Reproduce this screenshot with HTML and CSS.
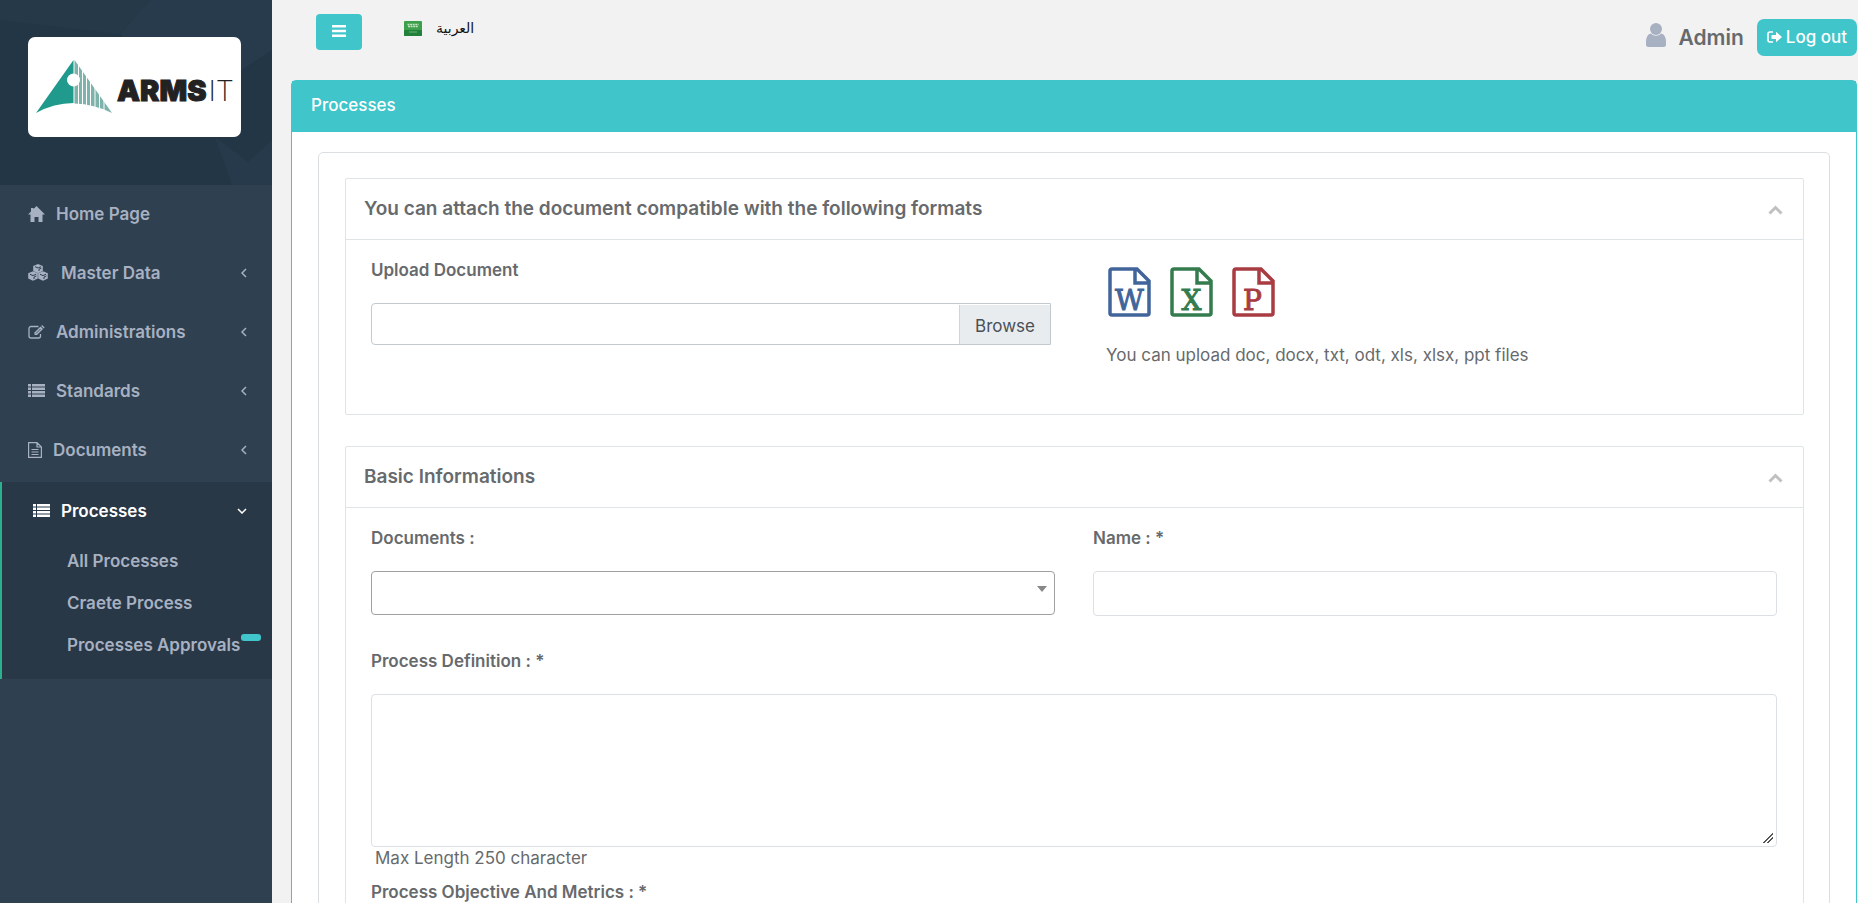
FILE: index.html
```html
<!DOCTYPE html>
<html lang="en">
<head>
    <meta charset="UTF-8">
    <meta name="viewport" content="width=device-width, initial-scale=1.0">
    <title>ARMSIT | Processes</title>
    <link rel="stylesheet" href="styles.css">
</head>
<body>
    <div class="wrapper">
        <nav class="sidebar">
            <div class="sidebar-header">
                <svg class="header-pattern" viewBox="0 0 272 185" preserveAspectRatio="none">
                    <path d="M150 0h122v50L180 110 120 34z" fill="#273b4c"/>
                    <path d="M0 0h150l-30 34L0 20z" fill="#253949"/>
                    <path d="M215 137l33 25 24-22v45h-40z" fill="#263a4b"/>
                </svg>
                <a href="#" class="logo">
                    <svg class="logo-mark" width="76" height="54" viewBox="0 0 76 54">
                        <path d="M37.500 0v43Q18 43 0 53z" fill="#1f9a8c"/>
                        <path d="M38.500 0L76 53Q58 44 38.500 43.500z" fill="#7db3aa"/>
                        <path d="M42.500 0v54M46.500 0v54M50.500 0v54M54.500 0v54M59 0v54M63.500 0v54M68 0v54" stroke="#fff" stroke-width="1"/>
                        <circle cx="37.500" cy="20" r="6.500" fill="#fff"/>
                    </svg>
                    <span class="logo-text"><b>ARMS</b><i>IT</i></span>
                </a>
            </div>

            <ul class="menu">
                <li>
                    <a href="#" class="menu-link">
                        <svg width="17" height="16" viewBox="0 0 17 16" fill="currentColor"><path d="M8.500 0L17 8.500h-2.500V16h-4v-5h-4v5h-4V8.500H0L3 5.500V2h2.500v1z"/></svg>
                        <span>Home Page</span>
                    </a>
                </li>
                <li>
                    <a href="#" class="menu-link">
                        <svg width="20" height="17" viewBox="0 0 20 17">
                            <g fill="currentColor"><path d="M10 0l4.800 2v5L10 9.200 5.200 7V2z"/><path d="M5 7.200l4.800 2v5.300L5 16.800.200 14.500V9.200z"/><path d="M15 7.200l4.800 2v5.300L15 16.800l-4.800-2.300V9.200z"/></g>
                            <g class="cube-line"><path d="M7 2.700l3 1.300 3-1.300M11 7V5.200l2.400-1"/><path d="M2 10.300l3 1.300 3-1.300M6 15v-2l2.400-1"/><path d="M12 10.300l3 1.300 3-1.300M16 15v-2l2.400-1"/></g>
                        </svg>
                        <span class="menu-wide">Master Data</span>
                        <svg class="arrow" width="6" height="10" viewBox="0 0 6 10"><path d="M5 1L1 5l4 4"/></svg>
                    </a>
                </li>
                <li>
                    <a href="#" class="menu-link">
                        <svg width="17" height="14" viewBox="0 0 17 14" fill="none" stroke="currentColor">
                            <path d="M10.500 1.500H3A2 2 0 0 0 1 3.500v7.500a2 2 0 0 0 2 2h7.500a2 2 0 0 0 2-2V9" stroke-width="1.300"/>
                            <path d="M6.500 10V7.500l6-6 2.500 2.500-6 6z" fill="currentColor" stroke="none"/><path d="M13.200.900l.9-.9 2.500 2.500-.9.900z" fill="currentColor" stroke="none"/>
                            <path d="M8 8.500l4.500-4.500" stroke="#2f4050" stroke-width=".8"/>
                        </svg>
                        <span>Administrations</span>
                        <svg class="arrow" width="6" height="10" viewBox="0 0 6 10"><path d="M5 1L1 5l4 4"/></svg>
                    </a>
                </li>
                <li>
                    <a href="#" class="menu-link">
                        <svg width="17" height="13" viewBox="0 0 17 13" fill="currentColor"><path d="M0 0h3v2.500H0zM4 0h13v2.500H4zM0 3.500h3V6H0zM4 3.500h13V6H4zM0 7h3v2.500H0zM4 7h13v2.500H4zM0 10.500h3V13H0zM4 10.500h13V13H4z"/></svg>
                        <span>Standards</span>
                        <svg class="arrow" width="6" height="10" viewBox="0 0 6 10"><path d="M5 1L1 5l4 4"/></svg>
                    </a>
                </li>
                <li>
                    <a href="#" class="menu-link">
                        <svg width="14" height="16" viewBox="0 0 14 16" fill="none" stroke="currentColor" stroke-width="1.200"><path d="M.6.600h8.400l4.400 4.400v10.400H.6zM9 .600V5h4.400M3.500 7.500h7M3.500 10h7M3.500 12.500h7"/></svg>
                        <span>Documents</span>
                        <svg class="arrow" width="6" height="10" viewBox="0 0 6 10"><path d="M5 1L1 5l4 4"/></svg>
                    </a>
                </li>
                <li class="active">
                    <a href="#" class="menu-link">
                        <svg width="17" height="13" viewBox="0 0 17 13" fill="currentColor"><path d="M0 0h3v2.500H0zM4 0h13v2.500H4zM0 3.500h3V6H0zM4 3.500h13V6H4zM0 7h3v2.500H0zM4 7h13v2.500H4zM0 10.500h3V13H0zM4 10.500h13V13H4z"/></svg>
                        <span>Processes</span>
                        <svg class="arrow" width="10" height="6" viewBox="0 0 10 6"><path d="M1 1l4 4 4-4"/></svg>
                    </a>
                    <ul class="submenu">
                        <li><a href="#">All Processes</a></li>
                        <li><a href="#">Craete Process</a></li>
                        <li><a href="#">Processes Approvals<span class="badge"></span></a></li>
                    </ul>
                </li>
            </ul>
        </nav>

        <main class="content">
            <header class="topbar">
                <button type="button" class="btn menu-toggle" aria-label="Toggle menu">
                    <svg width="14" height="12" viewBox="0 0 14 12" fill="#fff"><path d="M0 0h14v2.500H0zM0 4.700h14v2.500H0zM0 9.400h14v2.500H0z"/></svg>
                </button>
                <a href="#" class="language">
                    <svg width="18" height="15" viewBox="0 0 18 15">
                        <rect width="18" height="15" rx="1" fill="#3fa04b"/>
                        <rect y="9" width="18" height="6" rx="1" fill="#21803a"/>
                        <path d="M3.500 3.500h11M4 5.500h10" stroke="#c5e3c5" stroke-width="1.500" stroke-dasharray="2 .6"/>
                        <path d="M5 11h8" stroke="#6db578"/>
                    </svg>
                    <span lang="ar" dir="rtl">العربية</span>
                </a>
                <div class="user">
                    <svg class="user-icon" width="20" height="24" viewBox="0 0 20 24" fill="#a7b1c2"><circle cx="10" cy="6" r="6"/><path d="M4.500 10.500Q10 15 15.500 10.500Q20 12 20 19v2.500Q20 24 17.500 24h-15Q0 24 0 21.500V19Q0 12 4.500 10.500z"/></svg>
                    <span class="user-name">Admin</span>
                    <button type="button" class="btn logout">
                        <svg width="15" height="12" viewBox="0 0 15 12"><path d="M6 1H3Q1 1 1 3v6q0 2 2 2h3" fill="none" stroke="#fff" stroke-width="1.600"/><path d="M4.500 4H9V.700L15 6l-6 5.300V8H4.500z" fill="#fff"/></svg>
                        Log out
                    </button>
                </div>
            </header>

            <section class="panel">
                <h1 class="panel-heading">Processes</h1>
                <div class="panel-body">
                    <form class="card">
                        <div class="ibox">
                            <div class="ibox-title">
                                <h2>You can attach the document compatible with the following formats</h2>
                                <button type="button" class="collapse" aria-label="Collapse">
                                    <svg width="15" height="10" viewBox="0 0 15 10"><path d="M1.500 8.500l6-6 6 6"/></svg>
                                </button>
                            </div>
                            <div class="ibox-content upload-row">
                                <div class="field file-field">
                                    <label for="upload">Upload Document</label>
                                    <div class="file-group">
                                        <input type="text" id="upload" readonly>
                                        <button type="button">Browse</button>
                                    </div>
                                </div>
                                <div class="formats">
                                    <div class="format-icons">
                                        <svg class="word" width="43" height="50" viewBox="0 0 43 50"><path d="M2 4Q2 2 4 2h25l12 12v32q0 2-2 2H4q-2 0-2-2zM27 2v14h14"/><text x="21.500" y="43">W</text></svg>
                                        <svg class="excel" width="43" height="50" viewBox="0 0 43 50"><path d="M2 4Q2 2 4 2h25l12 12v32q0 2-2 2H4q-2 0-2-2zM27 2v14h14"/><text x="21.500" y="43">X</text></svg>
                                        <svg class="powerpoint" width="43" height="50" viewBox="0 0 43 50"><path d="M2 4Q2 2 4 2h25l12 12v32q0 2-2 2H4q-2 0-2-2zM27 2v14h14"/><text x="20.500" y="43">P</text></svg>
                                    </div>
                                    <p>You can upload doc, docx, txt, odt, xls, xlsx, ppt files</p>
                                </div>
                            </div>
                        </div>

                        <div class="ibox">
                            <div class="ibox-title">
                                <h2>Basic Informations</h2>
                                <button type="button" class="collapse" aria-label="Collapse">
                                    <svg width="15" height="10" viewBox="0 0 15 10"><path d="M1.500 8.500l6-6 6 6"/></svg>
                                </button>
                            </div>
                            <div class="ibox-content">
                                <div class="field">
                                    <label for="documents">Documents :</label>
                                    <div class="select-wrap">
                                        <select id="documents"><option></option></select>
                                    </div>
                                </div>
                                <div class="field">
                                    <label for="name">Name : *</label>
                                    <input type="text" id="name" class="form-control">
                                </div>
                                <div class="field full">
                                    <label for="definition">Process Definition : *</label>
                                    <textarea id="definition" class="form-control" maxlength="250"></textarea>
                                    <small>Max Length 250 character</small>
                                    <label for="objective">Process Objective And Metrics : *</label>
                                    <textarea id="objective" class="form-control" maxlength="250"></textarea>
                                </div>
                            </div>
                        </div>
                    </form>
                </div>
            </section>
        </main>
    </div>
</body>
</html>
```
FILE: styles.css
```css
* {
    box-sizing: border-box;
}

body {
    margin: 0;
    font-family: Inter, "Open Sans", sans-serif;
    font-size: 17px;
    line-height: 24px;
    color: #676a6c;
    background-color: #f2f2f3;
}

ul {
    list-style: none;
    margin: 0;
    padding: 0;
}

a {
    color: inherit;
    text-decoration: none;
}

button, input, select, textarea {
    font: inherit;
    color: inherit;
}

button {
    cursor: pointer;
}

.wrapper {
    display: flex;
    height: 100vh;
    overflow: hidden;
}

/* sidebar */
.sidebar {
    flex: 0 0 272px;
    background-color: #2f4050;
    color: #a7b1c2;
    font-weight: 600;
}

.sidebar-header {
    position: relative;
    height: 185px;
    padding: 37px 31px 0 28px;
    background-color: #223646;
}

.header-pattern {
    position: absolute;
    top: 0;
    left: 0;
    width: 100%;
    height: 100%;
}

.logo {
    position: relative;
    display: flex;
    align-items: center;
    gap: 5px;
    height: 100px;
    padding-left: 8px;
    background-color: #fff;
    border-radius: 7px;
}

.logo-text {
    display: flex;
    gap: 2px;
    padding-top: 8px;
    font-size: 29px;
    color: #222;
}

.logo-text b {
    font-weight: 900;
    -webkit-text-stroke: 1px #222;
}

.logo-text i {
    font-style: normal;
    font-weight: 200;
}

.menu-link {
    display: flex;
    align-items: center;
    gap: 11px;
    height: 59px;
    padding: 0 25px 2px 28px;
}

.menu-wide {
    padding-left: 2px;
}

.cube-line {
    fill: none;
    stroke: #2f4050;
    stroke-width: 1;
}

.arrow {
    margin-left: auto;
    fill: none;
    stroke: currentColor;
    stroke-width: 1.5;
}

.active {
    margin-top: 2px;
    padding-bottom: 12px;
    background-color: #293846;
    border-left: 2px solid #2bb08d;
}

.active > .menu-link {
    padding-left: 31px;
    color: #fff;
}

.submenu a {
    display: flex;
    align-items: center;
    height: 42px;
    padding: 0 0 2px 65px;
}

.badge {
    width: 20px;
    height: 7px;
    margin: 0 0 16px 1px;
    background-color: #3fc5ca;
    border-radius: 3px;
}

/* top bar */
.content {
    flex: 1;
    min-width: 0;
    padding: 0 1px 0 19px;
}

.topbar {
    display: flex;
    align-items: flex-start;
    height: 80px;
    padding: 14px 0 0 25px;
}

.btn {
    display: flex;
    align-items: center;
    justify-content: center;
    border: none;
    background-color: #3fc5ca;
    color: #fff;
}

.menu-toggle {
    width: 46px;
    height: 36px;
    padding-bottom: 3px;
    border-radius: 4px;
}

.language {
    display: flex;
    align-items: center;
    gap: 14px;
    margin: 2px 0 0 42px;
    font-family: "DejaVu Sans", sans-serif;
    font-size: 14px;
    color: #111;
}

.user {
    display: flex;
    align-items: center;
    margin: 5px 0 0 auto;
}

.user-icon {
    margin-bottom: 5px;
}

.user-name {
    margin: 0 13px 0 12px;
    font-size: 21px;
    font-weight: 600;
}

.logout {
    gap: 4px;
    height: 37px;
    padding: 0 10px 2px;
    border-radius: 7px;
    font-weight: 500;
}

/* panel */
.panel {
    border: 1px solid #3fc5ca;
    border-radius: 5px;
    background-color: #fff;
}

.panel-heading {
    margin: 0;
    padding: 12px 19px 15px;
    background-color: #3fc5ca;
    color: #fff;
    font-size: 17px;
    font-weight: 500;
}

.panel-body {
    padding: 20px 26px;
}

.card {
    padding: 25px 25px 25px 26px;
    border: 1px solid #dcdfe1;
    border-radius: 5px;
}

.ibox {
    margin-bottom: 31px;
    border: 1px solid #dfe4e6;
    border-radius: 2px;
}

.ibox-title {
    display: flex;
    align-items: center;
    justify-content: space-between;
    height: 61px;
    padding: 0 20px 0 18px;
    border-bottom: 1px solid #dfe4e6;
}

.ibox-title h2 {
    margin: 0;
    font-size: 19px;
    font-weight: 600;
}

.collapse {
    display: flex;
    padding: 2px 0 0;
    border: none;
    background: none;
}

.collapse path {
    fill: none;
    stroke: #c0c0c0;
    stroke-width: 3;
}

.ibox-content {
    display: grid;
    grid-template-columns: 1fr 1fr;
    gap: 33px 38px;
    padding: 18px 26px 18px 25px;
}

.upload-row {
    padding-bottom: 47px;
}

.field {
    display: flex;
    flex-direction: column;
}

.field label {
    margin-bottom: 21px;
    font-weight: 600;
}

.full {
    grid-column: 1 / -1;
}

.file-field {
    padding-right: 4px;
}

.file-group {
    display: flex;
    height: 42px;
    border: 1px solid #c3cacf;
    border-radius: 4px 0 0 4px;
}

.file-group input {
    flex: 1;
    min-width: 0;
    border: none;
    background: none;
}

.file-group button {
    width: 91px;
    margin-top: 1px;
    padding: 2px 0 0;
    border: none;
    border-left: 1px solid #ced4da;
    background-color: #e9ecef;
    color: #495057;
}

.formats {
    padding: 9px 0 0 13px;
}

.format-icons {
    display: flex;
    gap: 19px;
    padding-left: 2px;
}

.format-icons path {
    fill: none;
    stroke: currentColor;
    stroke-width: 3.5;
}

.format-icons text {
    fill: currentColor;
    stroke: currentColor;
    stroke-width: 1;
    font: 28px "DejaVu Serif", serif;
    text-anchor: middle;
}

.word {
    color: #41659a;
}

.excel {
    color: #347c4e;
}

.powerpoint {
    color: #a83c42;
}

.formats p {
    margin: 26px 0 0;
}

.form-control {
    height: 45px;
    padding: 6px 12px;
    border: 1px solid #dcdfe3;
    border-radius: 4px;
    background-color: #fff;
}

textarea.form-control {
    height: 153px;
    resize: vertical;
}

textarea::-webkit-resizer {
    background: linear-gradient(135deg, transparent 48%, #555 48%, #555 56%, transparent 56%, transparent 68%, #555 68%, #555 76%, transparent 76%) no-repeat 2px 2px / 10px 10px;
}

.field small {
    margin-bottom: 10px;
    padding-left: 4px;
    font-size: 17px;
    line-height: 23px;
}

.select-wrap {
    position: relative;
}

.select-wrap select {
    display: block;
    width: 100%;
    height: 44px;
    border: 1px solid #a0a0a0;
    border-radius: 4px;
    background-color: #fff;
    appearance: none;
}

.select-wrap::after {
    content: "";
    position: absolute;
    top: 15px;
    right: 8px;
    border: 5px solid transparent;
    border-top: 6px solid #888;
    border-bottom: none;
    pointer-events: none;
}
```
